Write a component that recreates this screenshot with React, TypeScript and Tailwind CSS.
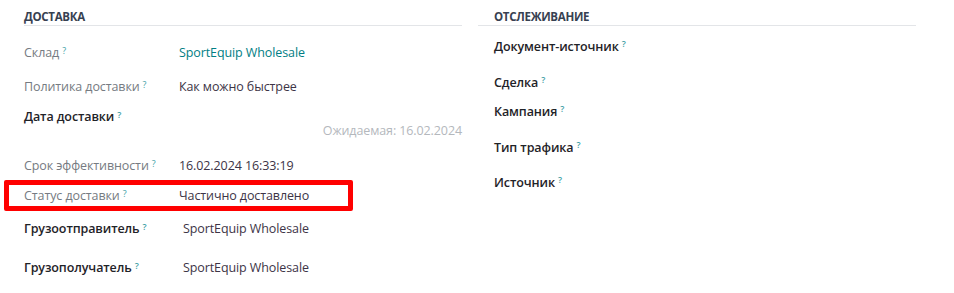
import React from "react";

const font = { fontFamily: '"Open Sans", "Noto Sans", sans-serif' };

function Help() {
  return <sup className="ml-[3px] text-[9px] text-[#3f9fa6] relative -top-[3px]">?</sup>;
}

function Header({ title, indent }: { title: string; indent?: boolean }) {
  return (
    <div className={`h-[26px] pt-[9px] border-b border-[#e3e5e8] ${indent ? "pl-[16px]" : ""}`}>
      <div className="text-[11.5px] leading-[16px] font-bold uppercase tracking-[-0.3px] text-[#374151]">{title}</div>
    </div>
  );
}

export default function App() {
  return (
    <div className="relative w-[954px] h-[293px] bg-white text-[12.5px] tracking-[-0.1px]" style={font}>
      <div className="flex pl-[24px] gap-[16px]">
        {/* DELIVERY */}
        <div className="w-[438px]">
          <Header title="Доставка" />

          <div className="mt-[12px] h-[30px] flex items-center">
            <div className="w-[155px] text-[#767b82]">Склад<Help /></div>
            <div className="text-[#017e84]">SportEquip Wholesale</div>
          </div>

          <div className="mt-[4px] h-[30px] flex items-center">
            <div className="w-[155px] text-[#767b82]">Политика доставки<Help /></div>
            <div className="text-[#3d3446]">Как можно быстрее</div>
          </div>

          <div className="mt-[7px] h-[16px] flex items-center">
            <div className="w-[155px] font-semibold text-[#1f2328]">Дата доставки<Help /></div>
          </div>
          <div className="-mt-[1px] h-[14px] leading-[14px] text-right text-[#b4b8bd]">Ожидаемая: 16.02.2024</div>

          <div className="mt-[13px] h-[30px] flex items-center">
            <div className="w-[155px] text-[#767b82]">Срок эффективности<Help /></div>
            <div className="text-[#3d3446]">16.02.2024 16:33:19</div>
          </div>

          <div className="h-[30px] flex items-center">
            <div className="w-[155px] text-[#767b82]">Статус доставки<Help /></div>
            <div className="text-[#3d3446]">Частично доставлено</div>
          </div>

          <div className="mt-[3px] h-[30px] flex items-center">
            <div className="w-[159px] font-semibold text-[#1f2328]">Грузоотправитель<Help /></div>
            <div className="text-[#3d3446]">SportEquip Wholesale</div>
          </div>

          <div className="mt-[9px] h-[30px] flex items-center">
            <div className="w-[159px] font-semibold text-[#1f2328]">Грузополучатель<Help /></div>
            <div className="text-[#3d3446]">SportEquip Wholesale</div>
          </div>
        </div>

        {/* TRACKING */}
        <div className="w-[438px]">
          <Header title="Отслеживание" indent />
          <div className="pl-[16px] font-semibold text-[#1f2328]">
            <div className="mt-[8px] h-[26px] flex items-center">Документ-источник<Help /></div>
            <div className="mt-[10px] h-[26px] flex items-center">Сделка<Help /></div>
            <div className="mt-[3px] h-[26px] flex items-center">Кампания<Help /></div>
            <div className="mt-[10px] h-[26px] flex items-center">Тип трафика<Help /></div>
            <div className="mt-[9px] h-[26px] flex items-center">Источник<Help /></div>
          </div>
        </div>
      </div>

      {/* highlight annotation */}
      <div className="absolute left-[4px] top-[180px] w-[349px] h-[31px] border-[5px] border-[#ff0000] rounded-[2px]" />
    </div>
  );
}
